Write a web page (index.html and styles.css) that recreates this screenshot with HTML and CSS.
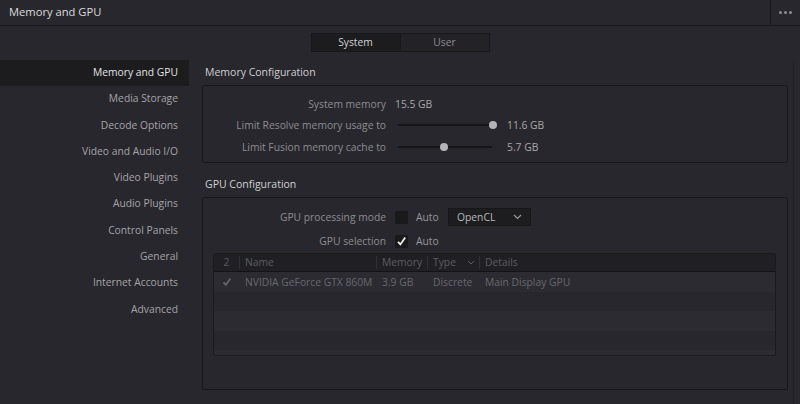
FILE: index.html
```html
<!DOCTYPE html>
<html lang="en">
<head>
    <meta charset="UTF-8">
    <title>Memory and GPU</title>
    <link rel="stylesheet" href="styles.css">
</head>
<body>
    <div class="titlebar">
        <div class="title">Memory and GPU</div>
        <div class="more"><span></span><span></span><span></span></div>
    </div>

    <div class="window">
        <div class="tabs">
            <div class="tab active">System</div>
            <div class="tab">User</div>
        </div>

        <div class="main">
            <!-- left menu -->
            <div class="sidebar">
                <div class="nav-item selected">Memory and GPU</div>
                <div class="nav-item">Media Storage</div>
                <div class="nav-item">Decode Options</div>
                <div class="nav-item">Video and Audio I/O</div>
                <div class="nav-item">Video Plugins</div>
                <div class="nav-item">Audio Plugins</div>
                <div class="nav-item">Control Panels</div>
                <div class="nav-item">General</div>
                <div class="nav-item">Internet Accounts</div>
                <div class="nav-item">Advanced</div>
            </div>

            <div class="content">
                <h3 class="group-title">Memory Configuration</h3>
                <div class="group mem-group">
                    <div class="row">
                        <div class="label">System memory</div>
                        <div class="value">15.5 GB</div>
                    </div>
                    <div class="row">
                        <div class="label">Limit Resolve memory usage to</div>
                        <div class="slider"><div class="thumb" style="left: 91px"></div></div>
                        <div class="value">11.6 GB</div>
                    </div>
                    <div class="row">
                        <div class="label">Limit Fusion memory cache to</div>
                        <div class="slider"><div class="thumb" style="left: 42px"></div></div>
                        <div class="value">5.7 GB</div>
                    </div>
                </div>

                <h3 class="group-title gpu-title">GPU Configuration</h3>
                <div class="group gpu-group">
                    <div class="row gpu-row">
                        <div class="label">GPU processing mode</div>
                        <div class="checkbox"></div>
                        <div class="check-label">Auto</div>
                        <div class="dropdown">
                            <span>OpenCL</span>
                            <svg width="9" height="6" viewBox="0 0 9 6"><path d="M1 1 L4.5 4.5 L8 1" fill="none" stroke="#9a9a9e" stroke-width="1.2"/></svg>
                        </div>
                    </div>
                    <div class="row gpu-row">
                        <div class="label">GPU selection</div>
                        <div class="checkbox">
                            <svg width="13" height="13" viewBox="0 0 13 13"><path d="M3 6.8 L5.4 9.4 L10.2 2.6" fill="none" stroke="#f2f2f2" stroke-width="1.8"/></svg>
                        </div>
                        <div class="check-label">Auto</div>
                    </div>

                    <div class="gpu-table">
                        <div class="t-head">
                            <div class="c c-num">2</div>
                            <div class="c c-name">Name</div>
                            <div class="c c-mem">Memory</div>
                            <div class="c c-type">Type
                                <svg width="8" height="5" viewBox="0 0 8 5"><path d="M1 1 L4 4 L7 1" fill="none" stroke="#5c5c61" stroke-width="1"/></svg>
                            </div>
                            <div class="c c-details">Details</div>
                        </div>
                        <div class="t-row odd">
                            <div class="c c-num">
                                <svg width="12" height="12" viewBox="0 0 12 12"><path d="M2.5 6.3 L4.8 8.8 L9.4 2.6" fill="none" stroke="#66666b" stroke-width="1.7"/></svg>
                            </div>
                            <div class="c c-name">NVIDIA GeForce GTX 860M</div>
                            <div class="c c-mem">3.9 GB</div>
                            <div class="c c-type">Discrete</div>
                            <div class="c c-details">Main Display GPU</div>
                        </div>
                        <div class="t-row"></div>
                        <div class="t-row odd"></div>
                        <div class="t-row"></div>
                        <div class="t-row odd last"></div>
                    </div>
                </div>
            </div>
        </div>
    </div>
</body>
</html>
```

FILE: styles.css
```css
body {
    margin: 0;
    background-color: #28272d;
    font-family: "Open Sans", "Liberation Sans", sans-serif;
    font-size: 10.3px;
    color: #a6a6aa;
    width: 800px;
    height: 404px;
    overflow: hidden;
}

.titlebar {
    display: flex;
    height: 25px;
    border-bottom: 1px solid #18181b;
    background-color: #28272d;
}

.title {
    flex: 1;
    padding-left: 9px;
    line-height: 24px;
    font-size: 11.2px;
    color: #dcdcde;
}

.more {
    width: 29px;
    border-left: 1px solid #18181b;
    display: flex;
    align-items: center;
    justify-content: center;
    gap: 2px;
}

.more span {
    width: 3px;
    height: 3px;
    border-radius: 50%;
    background-color: #8e8e92;
}

.window {
    height: 378px;
}

.tabs {
    display: flex;
    justify-content: center;
    padding-top: 7px;
}

.tab {
    width: 88px;
    height: 17px;
    line-height: 17px;
    text-align: center;
    border: 1px solid #18181b;
    background-color: #232227;
    color: #8c8c90;
}

.tab.active {
    background-color: #1c1c1f;
    color: #d2d2d4;
    border-right: none;
}

.main {
    display: flex;
    margin-top: 8px;
    margin-right: 6px;
    border-right: 1px solid #222126;
    height: 350px;
}

.sidebar {
    width: 189px;
}

.nav-item {
    height: 26.3px;
    line-height: 25px;
    text-align: right;
    padding-right: 11px;
    color: #a4a4a8;
}

.nav-item.selected {
    background-color: #1c1c1f;
    color: #e2e2e4;
}

.content {
    flex: 1;
    padding-left: 13px;
    padding-right: 5px;
}

.group-title {
    margin: 0;
    padding-left: 3px;
    font-size: 10.5px;
    font-weight: normal;
    color: #d0d0d2;
    height: 25px;
    line-height: 24px;
}

.gpu-title {
    margin-top: 6px;
    height: 28px;
    line-height: 30px;
}

.group {
    border: 1px solid #18181b;
    border-radius: 2px;
}

.mem-group {
    height: 69px;
    padding-top: 7px;
    box-sizing: content-box;
}

.mem-group .row {
    height: 21.5px;
}

.row {
    display: flex;
    align-items: center;
}

.label {
    width: 183px;
    text-align: right;
    padding-right: 9px;
    color: #8d8d91;
}

.value {
    color: #a8a8ac;
}

.slider {
    position: relative;
    width: 94px;
    height: 2px;
    margin-left: 3px;
    margin-right: 15px;
    background-color: #151517;
}

.thumb {
    position: absolute;
    top: -3px;
    width: 8px;
    height: 8px;
    border-radius: 50%;
    background-color: #b4b4b6;
}

.gpu-group {
    height: 193px;
    padding-top: 7px;
    box-sizing: border-box;
}

.gpu-row {
    height: 24px;
}

.checkbox {
    width: 13px;
    height: 13px;
    background-color: #1a1a1d;
    border-radius: 1px;
}

.checkbox svg {
    display: block;
}

.check-label {
    margin-left: 8px;
    width: 32px;
    color: #97979b;
}

.dropdown {
    display: flex;
    align-items: center;
    justify-content: space-between;
    width: 65px;
    height: 16px;
    padding: 0 8px 0 8px;
    background-color: #1d1d20;
    border: 1px solid #17171a;
    color: #b8b8bb;
}

.gpu-table {
    margin: 0 11px 0 10px;
    border: 1px solid #1b1b1e;
    border-radius: 2px;
    overflow: hidden;
}

.t-head, .t-row {
    display: flex;
    height: 19.5px;
    align-items: center;
}

.t-head {
    height: 17px;
    background-color: #202024;
    border-bottom: 1px solid #141416;
    color: #5c5c61;
}

.t-head .c {
    border-right: 1px solid #303035;
    height: 13px;
    line-height: 13px;
}

.t-head .c-details {
    border-right: none;
}

.t-row {
    background-color: #28272d;
    color: #68686d;
}

.t-row.odd {
    background-color: #2c2b31;
}

.t-row.last {
    height: 5px;
}

.c {
    padding-left: 5px;
    white-space: nowrap;
    box-sizing: border-box;
}

.c-num {
    width: 26px;
    padding-left: 0;
    text-align: center;
    display: flex;
    justify-content: center;
}

.c-name {
    width: 137px;
}

.c-mem {
    width: 51px;
}

.c-type {
    width: 52px;
    display: flex;
    align-items: center;
    justify-content: space-between;
    padding-right: 4px;
}

.c-details {
    flex: 1;
}
```
